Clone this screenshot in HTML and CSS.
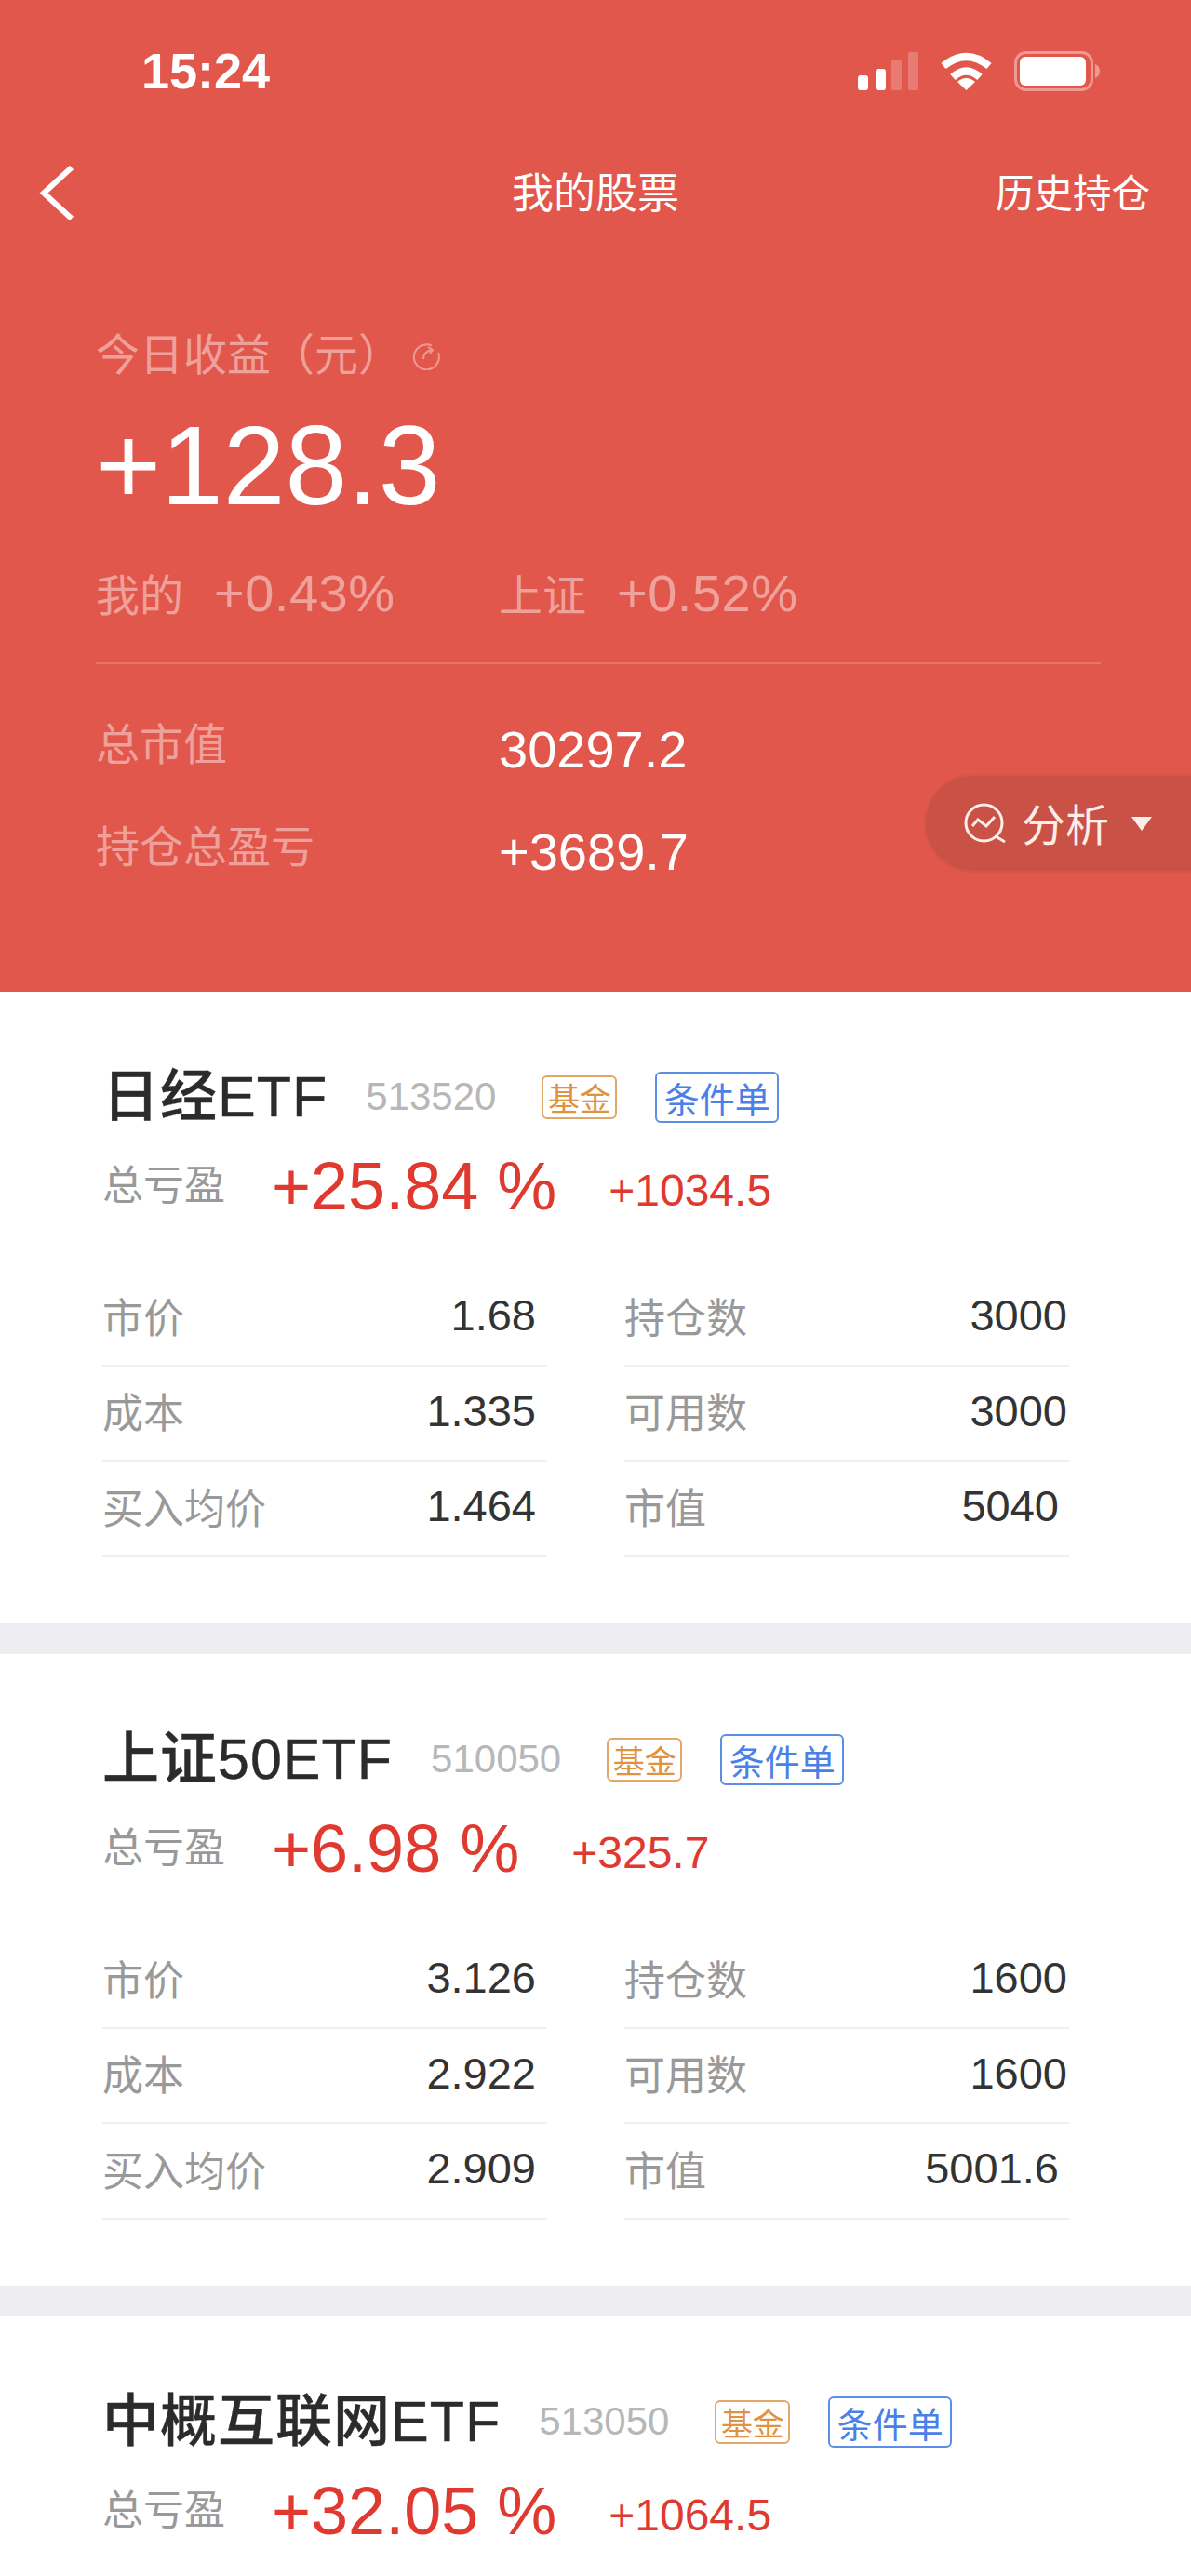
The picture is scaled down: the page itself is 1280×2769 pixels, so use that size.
FILE: index.html
```html
<!DOCTYPE html>
<html lang="zh-CN">
<head>
<meta charset="utf-8">
<title>我的股票</title>
<link rel="stylesheet" href="styles.css">
</head>
<body>
<div class="page">
  <header class="hero">
    <div class="status">
      <span class="time">15:24</span>
      <div class="status-icons">
        <svg class="signal" viewBox="0 0 65 41"><rect x="0" y="25" width="11" height="16" rx="3" fill="#fff"/><rect x="19" y="18" width="11" height="23" rx="3" fill="#fff"/><rect x="36" y="9" width="11" height="32" rx="2" fill="#fff" fill-opacity=".22"/><rect x="54" y="0" width="11" height="41" rx="2" fill="#fff" fill-opacity=".22"/></svg>
        <svg class="wifi" viewBox="0 0 57 41"><path d="M4 15Q28.5 -5 53 15" fill="none" stroke="#fff" stroke-width="8"/><path d="M14 27Q28.5 14 43 27" fill="none" stroke="#fff" stroke-width="8"/><path d="M28.5 41L19 32Q28.5 24 38 32Z" fill="#fff"/></svg>
        <svg class="battery" viewBox="0 0 92 43"><rect x="1.5" y="1.5" width="82" height="40" rx="11" fill="none" stroke="#fff" stroke-opacity=".4" stroke-width="3"/><rect x="6" y="6" width="71" height="31" rx="6" fill="#fff"/><path d="M87 14Q92 16 92 21.500Q92 27 87 29Z" fill="#fff" fill-opacity=".4"/></svg>
      </div>
    </div>
    <nav class="nav">
      <svg class="back" viewBox="0 0 37 59"><path d="M35 2L5 29.500L35 57" fill="none" stroke="#fff" stroke-width="6"/></svg>
      <span class="nav-title">我的股票</span>
      <span class="nav-link">历史持仓</span>
    </nav>
    <section class="summary">
      <div class="today-label">今日收益（元）
        <svg class="refresh" viewBox="0 0 30 31"><path d="M21 4.500A13.500 13.500 0 1 0 28 12" fill="none" stroke="#fff" stroke-opacity=".4" stroke-width="2"/><path d="M12 19Q12 11 21 9M17 6L22 9L19 13" fill="none" stroke="#fff" stroke-opacity=".4" stroke-width="2"/></svg>
      </div>
      <div class="today-value">+128.3</div>
      <div class="compare">
        <div class="compare-item"><span class="cn">我的</span><span class="pct">+0.43%</span></div>
        <div class="compare-item"><span class="cn">上证</span><span class="pct">+0.52%</span></div>
      </div>
      <div class="rule"></div>
      <div class="total"><span class="total-label">总市值</span><span class="total-value">30297.2</span></div>
      <div class="total second"><span class="total-label">持仓总盈亏</span><span class="total-value">+3689.7</span></div>
    </section>
    <div class="analyse">
      <svg class="analyse-icon" viewBox="0 0 45 45"><circle cx="21.500" cy="21.500" r="19.500" fill="none" stroke="#fdeeea" stroke-width="3"/><path d="M9 25L15 18L24 25L33 15" fill="none" stroke="#fdeeea" stroke-width="3"/><path d="M34 36L44 42" fill="none" stroke="#fdeeea" stroke-width="3"/></svg>
      <span class="analyse-text">分析</span>
      <span class="analyse-arrow"></span>
    </div>
  </header>

  <article class="card">
    <div class="title-row"><span class="name">日经ETF</span><span class="code">513520</span><span class="tag fund">基金</span><span class="tag cond">条件单</span></div>
    <div class="gain-row"><span class="gain-label">总亏盈</span><span class="gain-pct">+25.84 %</span><span class="gain-abs">+1034.5</span></div>
    <div class="table">
      <div class="cell"><span class="k">市价</span><span class="v">1.68</span></div>
      <div class="cell"><span class="k">持仓数</span><span class="v">3000</span></div>
      <div class="cell"><span class="k">成本</span><span class="v">1.335</span></div>
      <div class="cell"><span class="k">可用数</span><span class="v">3000</span></div>
      <div class="cell"><span class="k">买入均价</span><span class="v">1.464</span></div>
      <div class="cell"><span class="k">市值</span><span class="v inset">5040</span></div>
    </div>
  </article>

  <article class="card">
    <div class="title-row"><span class="name">上证50ETF</span><span class="code">510050</span><span class="tag fund">基金</span><span class="tag cond">条件单</span></div>
    <div class="gain-row"><span class="gain-label">总亏盈</span><span class="gain-pct">+6.98 %</span><span class="gain-abs">+325.7</span></div>
    <div class="table">
      <div class="cell"><span class="k">市价</span><span class="v">3.126</span></div>
      <div class="cell"><span class="k">持仓数</span><span class="v">1600</span></div>
      <div class="cell"><span class="k">成本</span><span class="v">2.922</span></div>
      <div class="cell"><span class="k">可用数</span><span class="v">1600</span></div>
      <div class="cell"><span class="k">买入均价</span><span class="v">2.909</span></div>
      <div class="cell"><span class="k">市值</span><span class="v inset">5001.6</span></div>
    </div>
  </article>

  <article class="card last">
    <div class="title-row"><span class="name">中概互联网ETF</span><span class="code">513050</span><span class="tag fund">基金</span><span class="tag cond">条件单</span></div>
    <div class="gain-row"><span class="gain-label">总亏盈</span><span class="gain-pct">+32.05 %</span><span class="gain-abs">+1064.5</span></div>
  </article>
</div>
</body>
</html>
```
FILE: styles.css
```css
* { box-sizing: border-box; }
html, body { margin: 0; padding: 0; }
body {
  background: #fff;
  font-family: "Liberation Sans", "Noto Sans CJK SC", sans-serif;
  overflow: hidden;
}
.page { width: 1280px; height: 2769px; overflow: hidden; background: #fff; }

.hero { position: relative; height: 1066px; background: #e2574c; color: #fff; }

.status { height: 152px; display: flex; align-items: center; justify-content: space-between; padding: 0 98px 0 152px; }
.time { font-size: 54px; font-weight: 700; line-height: 1; }
.status-icons { display: flex; align-items: center; }
.signal { width: 65px; height: 41px; margin-right: 23px; }
.wifi { width: 57px; height: 41px; margin-right: 23px; }
.battery { width: 92px; height: 43px; }

.nav { height: 110px; display: flex; align-items: center; justify-content: space-between; padding: 0 44px 0 42px; position: relative; font-family: "Noto Sans CJK SC", sans-serif; }
.back { width: 37px; height: 59px; }
.nav-title { position: absolute; left: 0; right: 0; padding-bottom: 5px; text-align: center; font-size: 45px; }
.nav-link { padding-bottom: 5px; font-size: 41.500px; }

.summary { padding: 88px 97px 0 103px; }
.today-label { height: 60px; display: flex; align-items: center; padding-bottom: 5px; font-family: "Noto Sans CJK SC", sans-serif; font-size: 47px; color: rgba(255,255,255,.45); }
.refresh { width: 30px; height: 31px; margin: 10px 0 0 11px; }
.today-value { height: 120px; margin-top: 30px; font-size: 120px; line-height: 120px; }
.compare { height: 60px; margin-top: 47px; display: flex; color: rgba(255,255,255,.45); }
.compare-item { width: 433px; display: flex; align-items: center; }
.cn { padding-bottom: 2px; font-family: "Noto Sans CJK SC", sans-serif; font-size: 47px; }
.pct { font-size: 56px; margin-left: 33px; letter-spacing: .5px; }
.rule { height: 2px; margin-top: 45px; background: rgba(255,255,255,.16); }
.total { height: 70px; margin-top: 56px; display: flex; align-items: center; }
.total.second { margin-top: 40px; }
.total-label { width: 433px; padding-bottom: 18px; font-family: "Noto Sans CJK SC", sans-serif; font-size: 47px; color: rgba(255,255,255,.45); }
.total-value { font-size: 56px; }

.analyse { position: absolute; right: 0; top: 832px; width: 287px; height: 106px; display: flex; align-items: center; padding-left: 41px; background: #ca5146; border: 2px solid #d65549; border-right: 0; border-radius: 53px 0 0 53px; }
.analyse-icon { width: 45px; height: 45px; }
.analyse-text { margin-left: 17px; padding-bottom: 4px; font-family: "Noto Sans CJK SC", sans-serif; font-size: 47px; color: #fdeeea; }
.analyse-arrow { margin-left: 24px; width: 0; height: 0; border-left: 11px solid transparent; border-right: 11px solid transparent; border-top: 15px solid #fdeeea; }

.card { height: 712px; padding: 80px 130px 0 110px; border-bottom: 33px solid #eeeef2; background: #fff; }
.card.last { border-bottom: 0; }
.title-row { height: 64px; display: flex; align-items: center; }
.name { padding-top: 2px; font-size: 61px; font-weight: 500; color: #2b2b2b; line-height: 64px; letter-spacing: 1px; -webkit-text-stroke: .4px #2b2b2b; }
.code { margin-left: 41px; padding-top: 2px; font-size: 42px; color: #b7b7b7; }
.tag { font-family: "Noto Sans CJK SC", sans-serif; display: flex; align-items: center; justify-content: center; background: #fff; border-radius: 6px; margin-top: 3px; }
.fund { margin-left: 49px; width: 81px; height: 47px; font-size: 34px; color: #e0923f; border: 2px solid #e2a669; }
.cond { margin-left: 41px; width: 133px; height: 55px; font-size: 38px; color: #4a80e8; border: 2px solid #5b8ee6; }

.gain-row { height: 60px; margin-top: 35px; display: flex; align-items: center; }
.gain-label { width: 182px; padding-bottom: 9px; font-family: "Noto Sans CJK SC", sans-serif; font-size: 44px; color: #999; }
.gain-pct { font-size: 72px; line-height: 60px; color: #e0392f; }
.gain-abs { margin-left: 56px; padding-top: 8px; font-size: 48px; color: #e0392f; }

.table { margin-top: 61px; display: grid; grid-template-columns: 478px 478px; column-gap: 83px; }
.cell { height: 102.500px; display: flex; align-items: center; justify-content: space-between; padding: 0 12px 5px 0; border-bottom: 2px solid #efefef; }
.cell:nth-child(even) { padding-right: 2px; }
.k { font-family: "Noto Sans CJK SC", sans-serif; font-size: 44px; color: #999; }
.v { font-size: 47px; color: #333; }
.inset { margin-right: 9px; }
```
